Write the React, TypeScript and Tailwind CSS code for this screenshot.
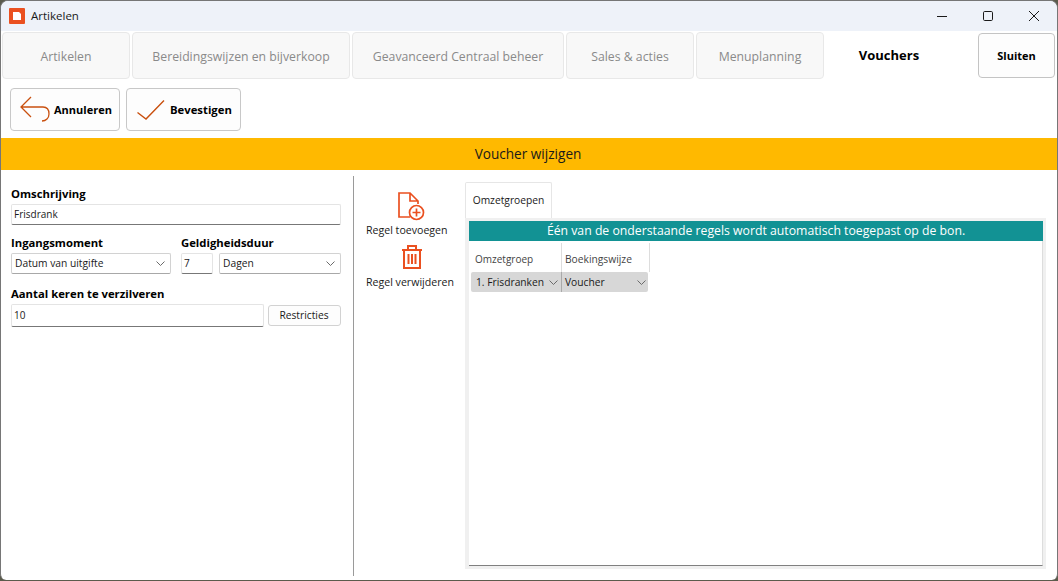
const font = 'font-["Open_Sans","Noto_Sans",sans-serif]';

function Chevron() {
  return (
    <svg width="9" height="5" viewBox="0 0 9 5" fill="none" stroke="#6b6b6b" className="shrink-0">
      <path d="M0.5 0.5 L4.5 4.5 L8.5 0.5" />
    </svg>
  );
}

function Tab({ label, width }: { label: string; width: string }) {
  return (
    <div className={`${width} h-[47px] shrink-0 flex items-center justify-center pt-[3px] rounded-[4px] border border-[#e8e8e8] bg-[#f8f8f8] text-[12.25px] text-[#8a8a8a]`}>
      {label}
    </div>
  );
}

function Select({ label, width }: { label: string; width: string }) {
  return (
    <div className={`${width} h-[21px] shrink-0 flex items-center justify-between pl-[3px] pr-[5px] rounded-[2px] border border-[#d2d2d2] border-b-[#a8a8a8] bg-white text-[10.25px] text-[#1a1a1a]`}>
      <span>{label}</span>
      <Chevron />
    </div>
  );
}

function Input({ value, width }: { value: string; width: string }) {
  return (
    <div className={`${width} shrink-0 flex items-center px-[2px] rounded-[2px] border border-[#e4e4e4] border-b-[#777777] bg-white text-[10px] text-[#1a1a1a]`}>
      {value}
    </div>
  );
}

function Label({ children }: { children: string }) {
  return <div className="text-[11.3px] font-bold leading-[16px] text-black">{children}</div>;
}

export default function App() {
  return (
    <div className={`${font} w-[1058px] h-[581px] overflow-hidden bg-[#5b5b4c]`}>
      <div className="w-full h-[580px] flex flex-col bg-white rounded-t-[8px] rounded-b-[6px] border-x border-t border-[#767676] overflow-hidden">
        {/* Title bar */}
        <div className="h-[30px] shrink-0 flex items-center bg-[#eef2f9] pl-[8px]">
          <svg width="16" height="16" viewBox="0 0 16 16">
            <rect width="16" height="16" rx="1" fill="#ea5020" />
            <path d="M4 4 H10 L12 6 V12 H4 Z" fill="#fff" />
          </svg>
          <span className="ml-[6px] text-[11.5px] text-[#1a1a1a]">Artikelen</span>
          <div className="ml-auto flex items-center">
            <svg width="46" height="30" viewBox="0 0 46 30" fill="none" stroke="#1a1a1a">
              <path d="M18 15.5 H28" />
            </svg>
            <svg width="46" height="30" viewBox="0 0 46 30" fill="none" stroke="#1a1a1a">
              <rect x="18.5" y="10.5" width="9" height="9" rx="1.2" />
            </svg>
            <svg width="46" height="30" viewBox="0 0 46 30" fill="none" stroke="#1a1a1a">
              <path d="M18 10 L28 20 M28 10 L18 20" />
            </svg>
          </div>
        </div>

        {/* Tabs */}
        <div className="h-[48px] shrink-0 flex items-start pt-[1px] pl-[1px] gap-[2px]">
          <Tab label="Artikelen" width="w-[128px]" />
          <Tab label="Bereidingswijzen en bijverkoop" width="w-[218px]" />
          <Tab label="Geavanceerd Centraal beheer" width="w-[212px]" />
          <Tab label="Sales & acties" width="w-[128px]" />
          <Tab label="Menuplanning" width="w-[128px]" />
          <div className="w-[126px] h-[46px] shrink-0 flex items-center justify-center pt-[2px] text-[13px] font-bold text-black">Vouchers</div>
          <div className="ml-[24px] w-[77px] h-[45px] shrink-0 mt-[1px] flex items-center justify-center pt-[1px] rounded-[4px] border border-[#c4c4c4] bg-[#fdfdfd] text-[11px] font-bold text-black">Sluiten</div>
        </div>

        {/* Toolbar */}
        <div className="h-[59px] shrink-0 flex items-start pt-[9px] pl-[9px] gap-[6px]">
          <div className="w-[110px] h-[43px] flex items-center rounded-[4px] border border-[#c8c8c8] bg-[#fdfdfd] pl-[9px] gap-[3px] text-[11px] font-bold text-black">
            <svg width="31" height="27" viewBox="0 0 31 27" fill="none" stroke="#c9500f" strokeWidth="1.3">
              <path d="M11 1 L1 11 L11 21 M1 11 H23 C27 11 29 14 29 18 C29 22 26 25 22 25" />
            </svg>
            <span className="pt-[2px]">Annuleren</span>
          </div>
          <div className="w-[115px] h-[43px] flex items-center rounded-[4px] border border-[#c8c8c8] bg-[#fdfdfd] pl-[10px] gap-[5px] text-[11.3px] font-bold text-black">
            <svg width="28" height="21" viewBox="0 0 28 21" fill="none" stroke="#c9500f" strokeWidth="1.4">
              <path d="M0.5 13.5 L9 20 L27 1.5" />
            </svg>
            <span className="pt-[2px]">Bevestigen</span>
          </div>
        </div>

        {/* Heading bar */}
        <div className="h-[32px] shrink-0 flex items-center justify-center pt-[1px] pr-[2px] bg-[#ffb900] text-[13.6px] text-[#1a1a1a]">Voucher wijzigen</div>

        {/* Body */}
        <div className="flex-1 min-h-0 flex pt-[6px]">
          {/* Left form */}
          <div className="w-[353px] shrink-0 h-[400px] border-r border-[#9a9a9a] pl-[10px] pt-[10px]">
            <Label>Omschrijving</Label>
            <div className="mt-[2px]"><Input value="Frisdrank" width="w-[330px] h-[21px]" /></div>
            <div className="mt-[10px] flex gap-[10px]">
              <div>
                <Label>Ingangsmoment</Label>
                <div className="mt-[2px]"><Select label="Datum van uitgifte" width="w-[160px]" /></div>
              </div>
              <div>
                <Label>Geldigheidsduur</Label>
                <div className="mt-[2px] flex gap-[6px]">
                  <Input value="7" width="w-[32px] h-[21px]" />
                  <Select label="Dagen" width="w-[122px]" />
                </div>
              </div>
            </div>
            <div className="mt-[12px]"><Label>Aantal keren te verzilveren</Label></div>
            <div className="mt-[2px] flex gap-[4px] items-start">
              <Input value="10" width="w-[253px] h-[23px]" />
              <div className="w-[73px] h-[21px] mt-[1px] flex items-center justify-center pr-[1px] rounded-[3px] border border-[#d2d2d2] bg-[#fdfdfd] text-[10.25px] text-[#1a1a1a]">Restricties</div>
            </div>
          </div>

          {/* Actions */}
          <div className="w-[111px] shrink-0 flex flex-col items-start pl-[12px] pt-[16px] text-[10.6px] text-[#1a1a1a]">
            <svg width="27" height="29" viewBox="0 0 27 29" fill="none" stroke="#ea5020" strokeWidth="1.7" className="ml-[32px]">
              <path d="M12 25 H1 V1 H12 L20 9 V12 M12 1 V9 H20" />
              <circle cx="18.5" cy="20.5" r="7" />
              <path d="M14.5 20.5 H22.5 M18.5 16.5 V24.5" />
            </svg>
            <div className="leading-[14px] mt-[2px]">Regel toevoegen</div>
            <svg width="20" height="24" viewBox="0 0 20 24" fill="none" stroke="#ea5020" strokeWidth="2" className="ml-[36px] mt-[8px]">
              <path d="M0 5 H20 M6 5 V1 H14 V5 M2 5 V23 H18 V5 M6.5 9 V19 M10 9 V19 M13.5 9 V19" />
            </svg>
            <div className="leading-[14px] mt-[6px]">Regel verwijderen</div>
          </div>

          {/* Tab panel */}
          <div className="flex-1 min-w-0 flex flex-col pt-[6px]">
            <div className="w-[87px] h-[36px] flex items-center justify-center border-x border-t border-[#e6e6e6] text-[10.25px] text-[#1a1a1a] rounded-t-[2px]">Omzetgroepen</div>
            <div className="w-[581px] h-[351px] border-[3px] border-[#f0f0f0] border-l-[4px] flex flex-col">
              <div className="h-[20px] shrink-0 flex items-center justify-center bg-[#129294] text-[12.25px] text-white">Één van de onderstaande regels wordt automatisch toegepast op de bon.</div>
              <div className="flex-1 flex flex-col pl-[2px] pt-[2px] border-b border-[#808080] border-r border-r-[#dddddd]">
                <div className="flex w-[179px] h-[29px] text-[#444444]">
                  <div className="w-[91px] border-r border-[#dddddd] pl-[4px] pt-[9px] text-[10px] leading-[14px]">Omzetgroep</div>
                  <div className="w-[88px] border-r border-[#dddddd] pl-[3px] pt-[9px] text-[10.25px] leading-[14px]">Boekingswijze</div>
                </div>
                <div className="flex w-[177px] h-[20px] rounded-[2px] bg-[#d7d7d7] text-[10.25px] text-[#1a1a1a]">
                  <div className="w-[91px] h-full flex items-center justify-between pl-[5px] pt-[1px] pr-[3px] border-r border-[#aaaaaa]">
                    <span>1. Frisdranken</span>
                    <Chevron />
                  </div>
                  <div className="flex-1 h-full flex items-center justify-between pl-[3px] pt-[1px] pr-[2px]">
                    <span>Voucher</span>
                    <Chevron />
                  </div>
                </div>
              </div>
            </div>
          </div>
        </div>
      </div>
    </div>
  );
}
